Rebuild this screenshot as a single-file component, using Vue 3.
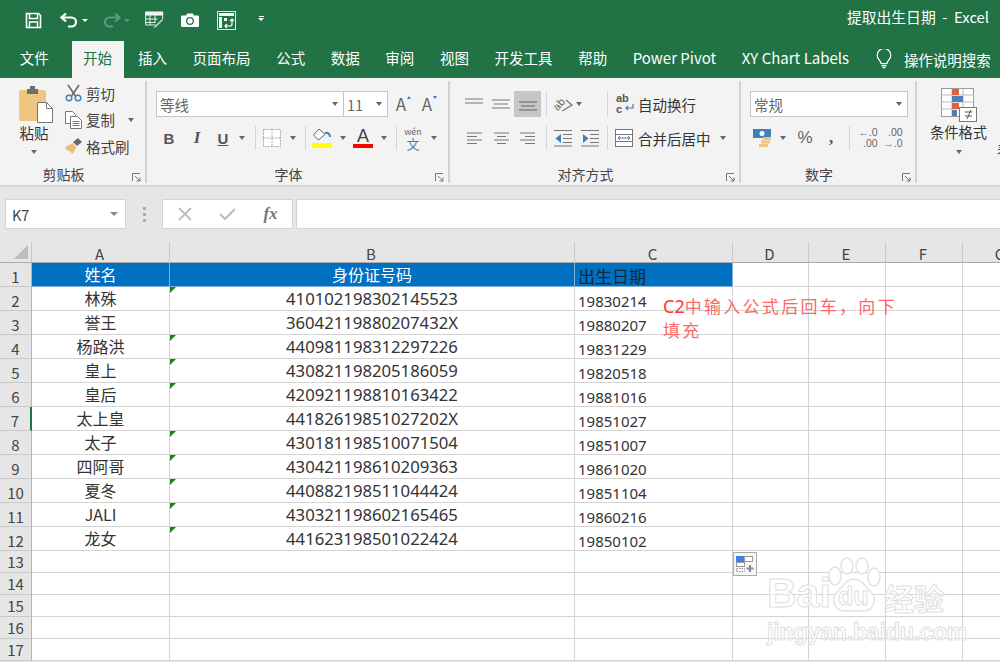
<template>
  <div class="excel">
    <header class="titlebar">
      <div class="qat">
        <svg class="q-save" width="17" height="17" viewBox="0 0 17 17"><path d="M1.500 1.500h12l2 2v12h-14z" fill="none" stroke="#fff" stroke-width="1.600"/><path d="M4.500 2v4.500h8V2M4.500 15v-5h8v5" fill="none" stroke="#fff" stroke-width="1.500"/></svg>
        <svg class="q-undo" width="19" height="16" viewBox="0 0 19 16"><path d="M6 1.500 1.500 5.500 6 9.500M2 5.500h9.500a4.500 4.500 0 0 1 0 9H8" fill="none" stroke="#fff" stroke-width="2.200"/></svg>
        <i class="q-caret"></i>
        <svg class="q-redo" width="19" height="16" viewBox="0 0 19 16"><path d="M13 1.500l4.500 4-4.500 4M17 5.500H7.500a4.500 4.500 0 0 0 0 9H11" fill="none" stroke="#5b9c7c" stroke-width="2.200"/></svg>
        <i class="q-caret dim"></i>
        <svg class="q-form" width="19" height="18" viewBox="0 0 19 18"><path d="M.7 1h17v3H.7z" fill="#e8f0ec" stroke="#fff"/><path d="M.7 4v10h10M.7 8h12M.7 11.500h10M5 4v10M10 4v7M17.700 4v4" fill="none" stroke="#e8f0ec"/><path d="M17 8l-7 7-1.500 2.500 2.500-1.500 7-7z" fill="#cfe0d7"/></svg>
        <svg class="q-camera" width="18" height="14" viewBox="0 0 18 14"><path d="M1 2.500h4L6.200 .5h5.600L13 2.500h4a1 1 0 0 1 1 1V13a1 1 0 0 1-1 1H1a1 1 0 0 1-1-1V3.500a1 1 0 0 1 1-1z" fill="#fff"/><circle cx="9" cy="8" r="3.300" fill="none" stroke="#217346" stroke-width="1.300"/></svg>
        <svg class="q-pivot" width="19" height="19" viewBox="0 0 19 19"><rect x=".5" y=".5" width="18" height="18" fill="none" stroke="#dfe9e3"/><path d="M2 2h15v3H2zM2 6h3v11H2z" fill="#f3f7f5"/><path d="M7 7h3v3H7z" fill="#f3f7f5"/><path d="M15 8v5a2 2 0 0 1-2 2H8M13 10l2-2 2 2M10 13l-2 2 2 2" fill="none" stroke="#fff" stroke-width="1.200"/></svg>
        <span class="q-more"><b></b><i class="q-caret"></i></span>
      </div>
      <div class="doc-title">提取出生日期&nbsp; -&nbsp; Excel</div>
    </header>

    <nav class="tabs">
      <span
        v-for="tab in tabs"
        :key="tab"
        class="tab"
        :class="{ active: tab === '开始', latin: /^[A-Z]/.test(tab) }"
      >{{ tab }}</span>
      <svg class="bulb" width="16" height="20" viewBox="0 0 16 20"><path d="M5 14.500c0-3-3.800-4-3.800-8.200a6.800 6.800 0 0 1 13.600 0C14.800 10.500 11 11.500 11 14.500z" fill="none" stroke="#fff" stroke-width="1.200"/><path d="M5.500 16.500h5M6.500 18.500h3" stroke="#fff" stroke-width="1.300"/></svg>
      <span class="search">操作说明搜索</span>
    </nav>

    <section class="ribbon">
      <div class="group g-clip">
        <div class="clip-body">
          <div class="paste">
            <svg width="34" height="38" viewBox="0 0 34 38"><rect y="5" width="27" height="31" rx="2" fill="#efc67f"/><path d="M8 4h3V1h5v3h3v5H8z" fill="#6f6f6f"/><path d="M18.500 17.500h9l6 6v14h-15z" fill="#fff" stroke="#777"/><path d="M27.500 17.500v6h6" fill="none" stroke="#777"/></svg>
            <span>粘贴</span>
            <i class="caret"></i>
          </div>
          <div class="clip-tools">
            <div class="clip-row">
              <svg width="17" height="18" viewBox="0 0 17 18"><path d="M3 1l7.500 11M14 1 6.500 12" stroke="#666" stroke-width="1.500"/><circle cx="4" cy="14" r="2.800" fill="none" stroke="#3f7fbd" stroke-width="1.400"/><circle cx="13" cy="14" r="2.800" fill="none" stroke="#3f7fbd" stroke-width="1.400"/></svg>
              <span>剪切</span>
            </div>
            <div class="clip-row">
              <svg width="17" height="18" viewBox="0 0 17 18"><path d="M.5.500h7l3 3v9H.500z" fill="#fff" stroke="#777"/><path d="M5.500 5.500h7l4 4v8h-11z" fill="#fff" stroke="#777"/><path d="M7.500 10.500h7M7.500 12.500h7M7.500 14.500h7" stroke="#4b86bd"/></svg>
              <span>复制</span>
              <i class="caret copy-caret"></i>
            </div>
            <div class="clip-row">
              <svg width="17" height="16" viewBox="0 0 17 16"><path d="M0 9.500 7.500 5l4 4.500-4 6.500L4 12.500 2.500 13z" fill="#e9bd72"/><path d="M8 4l5-4 4 4-5 4z" fill="#6a6a6a"/></svg>
              <span>格式刷</span>
            </div>
          </div>
        </div>
        <div class="group-label">剪贴板<svg class="launcher" viewBox="0 0 9 9"><path d="M.5 8V.500H8M3 3l5 5M8 4.500V8H4.500" fill="none" stroke="#777"/></svg></div>
      </div>

      <div class="group g-font">
        <div class="tool-rows">
          <div class="font-top">
            <div class="select font-name"><span>等线</span><i class="caret"></i></div>
            <div class="select font-size"><span>11</span><i class="caret"></i></div>
            <span class="grow">A<i class="tick up"></i></span>
            <span class="grow">A<i class="tick down"></i></span>
          </div>
          <div class="font-tools">
            <b class="fmt">B</b>
            <i class="fmt italic">I</i>
            <u class="fmt under">U</u>
            <i class="caret"></i>
            <i class="sep"></i>
            <svg width="18" height="18" viewBox="0 0 18 18"><rect x=".5" y=".5" width="17" height="17" fill="#fff" stroke="#aaa" stroke-dasharray="2 1"/><path d="M9 0v18M0 9h18" stroke="#aaa" stroke-dasharray="2 1"/></svg>
            <i class="caret"></i>
            <i class="sep"></i>
            <svg width="20" height="20" viewBox="0 0 20 20"><path d="M7 1 1.500 7l5 5 6.500-5.500z" fill="#fff" stroke="#666"/><path d="M13 5c3-1 5 1 5 4" fill="none" stroke="#3f7fbd" stroke-width="2"/><rect y="15" width="20" height="5" fill="#ffff00"/></svg>
            <i class="caret"></i>
            <span class="font-color">A</span>
            <i class="caret"></i>
            <i class="sep"></i>
            <span class="wen"><em>wén</em><strong>文</strong></span>
            <i class="caret"></i>
          </div>
        </div>
        <div class="group-label">字体<svg class="launcher" viewBox="0 0 9 9"><path d="M.5 8V.500H8M3 3l5 5M8 4.500V8H4.500" fill="none" stroke="#777"/></svg></div>
      </div>

      <div class="group g-align">
        <div class="tool-rows">
          <div class="align-top">
            <svg width="18" height="14" viewBox="0 0 18 14"><path d="M0 2h18M0 6h18" stroke="#777" stroke-width="1.200"/></svg>
            <svg width="18" height="14" viewBox="0 0 18 14"><path d="M0 3h18M2 7h14M0 11h18" stroke="#777" stroke-width="1.200"/></svg>
            <span class="active-tool"><svg width="18" height="14" viewBox="0 0 18 14"><path d="M0 5h18M2 9h14M0 13h18" stroke="#666" stroke-width="1.200"/></svg></span>
            <i class="sep"></i>
            <span class="orient">
              <span class="orient-ab">ab</span>
              <svg width="12" height="14" viewBox="0 0 12 14"><path d="M1 13l10-6-6-5" fill="none" stroke="#777" stroke-width="1.300"/></svg>
            </span>
            <i class="caret"></i>
            <span></span>
            <i class="sep"></i>
            <span class="wrap-icon">
              <span class="wrap-ab">ab<br>c</span>
              <svg width="9" height="8" viewBox="0 0 9 8"><path d="M8 0v4H1M3 2 1 4l2 2" fill="none" stroke="#3f7fbd" stroke-width="1.200"/></svg>
            </span>
            <span class="tool-text">自动换行</span>
          </div>
          <div class="align-bottom">
            <svg width="15" height="14" viewBox="0 0 15 14"><path d="M0 2h15M0 5.500h10M0 9h15M0 12.500h10" stroke="#777" stroke-width="1.100"/></svg>
            <svg width="15" height="14" viewBox="0 0 15 14"><path d="M0 2h15M3 5.500h9M0 9h15M3 12.500h9" stroke="#777" stroke-width="1.100"/></svg>
            <svg width="15" height="14" viewBox="0 0 15 14"><path d="M0 2h15M5 5.500h10M0 9h15M5 12.500h10" stroke="#777" stroke-width="1.100"/></svg>
            <i class="sep"></i>
            <svg width="18" height="18" viewBox="0 0 18 18"><path d="M0 1.500h18M9 5.500h9M9 9.500h9M9 13.500h9M0 17h18" stroke="#777"/><path d="M7 5 1.500 9.500 7 14z" fill="#3f7fbd"/></svg>
            <svg width="18" height="18" viewBox="0 0 18 18"><path d="M0 1.500h18M9 5.500h9M9 9.500h9M9 13.500h9M0 17h18" stroke="#777"/><path d="M2 5l5.500 4.500L2 14z" fill="#3f7fbd"/></svg>
            <i class="sep"></i>
            <svg width="18" height="18" viewBox="0 0 18 18"><rect x=".5" y=".5" width="17" height="17" fill="#fff" stroke="#777"/><path d="M0 5.500h18M0 12.500h18" stroke="#777"/><path d="M3 9h12M5 7 3 9l2 2M13 7l2 2-2 2" fill="none" stroke="#3f7fbd"/></svg>
            <span class="tool-text">合并后居中</span>
            <i class="caret merge-caret"></i>
          </div>
        </div>
        <div class="group-label">对齐方式<svg class="launcher" viewBox="0 0 9 9"><path d="M.5 8V.500H8M3 3l5 5M8 4.500V8H4.500" fill="none" stroke="#777"/></svg></div>
      </div>

      <div class="group g-number">
        <div class="tool-rows">
          <div class="select number-format"><span>常规</span><i class="caret"></i></div>
          <div class="number-tools">
            <svg width="20" height="20" viewBox="0 0 20 20"><rect y="1" width="18" height="9" fill="#3f7fbd"/><circle cx="9" cy="5.500" r="2.500" fill="#fff"/><rect x="10" y="9" width="8" height="3" fill="#eec57e"/><rect x="8" y="12.500" width="9" height="3" fill="#eec57e"/><rect x="6" y="16" width="9" height="3" fill="#eec57e"/></svg>
            <i class="caret"></i>
            <span class="percent">%</span>
            <b class="comma">,</b>
            <i class="sep"></i>
            <span class="dec"><em><b class="arrow">←</b>.0</em><em>.00</em></span>
            <span class="dec"><em>.00</em><em><b class="arrow">→</b>.0</em></span>
          </div>
        </div>
        <div class="group-label">数字<svg class="launcher" viewBox="0 0 9 9"><path d="M.5 8V.500H8M3 3l5 5M8 4.500V8H4.500" fill="none" stroke="#777"/></svg></div>
      </div>

      <div class="g-styles">
        <div class="styles-btn">
          <svg width="36" height="34" viewBox="0 0 36 34"><rect x=".5" y=".5" width="32" height="28" fill="#fff" stroke="#999"/><path d="M11 0v29M22 0v29M0 7h33M0 14h33M0 21h33" stroke="#bbb"/><rect x="11" y="1" width="7" height="6" fill="#e0603c"/><rect x="11" y="8" width="11" height="6" fill="#4a7fbc"/><rect x="11" y="15" width="7" height="6" fill="#e0603c"/><rect x="11" y="22" width="5" height="6" fill="#4a7fbc"/><rect x="18.500" y="19.500" width="17" height="14" fill="#fff" stroke="#777"/><path d="M24 24h7M24 28h7M30 22l-4 9" stroke="#555"/></svg>
          <span>条件格式</span>
          <i class="caret"></i>
        </div>
        <span class="next-btn">表</span>
      </div>
    </section>

    <section class="formula">
      <div class="name-box"><span>K7</span><i class="caret"></i></div>
      <div class="grip"><i></i><i></i><i></i></div>
      <div class="fx-box">
        <svg width="16" height="16" viewBox="0 0 16 16"><path d="M2 2l12 12M14 2 2 14" stroke="#bdbdbd" stroke-width="1.800"/></svg>
        <svg width="17" height="14" viewBox="0 0 17 14"><path d="M1 7l5 5L16 2" fill="none" stroke="#bdbdbd" stroke-width="2.200"/></svg>
        <span class="fx">fx</span>
      </div>
      <div class="formula-input"></div>
    </section>

    <section class="sheet">
      <div class="sheet-row col-heads">
        <div class="corner"><svg width="14" height="14" viewBox="0 0 14 14"><path d="M14 0v14H0z" fill="#bdbdbd"/></svg></div>
        <div v-for="col in columns" :key="col" class="col-head">{{ col }}</div>
      </div>
      <div class="sheet-row row-title">
        <div class="row-head">1</div>
        <div class="cell center fill light">姓名</div>
        <div class="cell center fill light">身份证号码</div>
        <div class="cell date title-date fill">出生日期</div>
        <div class="cell"></div><div class="cell"></div><div class="cell"></div><div class="cell"></div>
      </div>
      <div v-for="(p, i) in people" :key="p.id" class="sheet-row row-data">
        <div class="row-head" :class="{ marked: i === 5 }">{{ i + 2 }}</div>
        <div class="cell center">{{ p.name }}</div>
        <div class="cell center id" :class="{ flagged: !p.id.endsWith('X') }">{{ p.id }}</div>
        <div class="cell date">{{ p.date }}</div>
        <div class="cell"></div><div class="cell"></div><div class="cell"></div><div class="cell"></div>
      </div>
      <div v-for="n in emptyRows" :key="n" class="sheet-row row-empty">
        <div class="row-head">{{ n }}</div>
        <div class="cell"></div><div class="cell"></div><div class="cell"></div>
        <div class="cell"></div><div class="cell"></div><div class="cell"></div><div class="cell"></div>
      </div>

      <div class="note"><span class="note-c2">C2</span>中输入公式后回车，向下填充</div>

      <div class="paste-options">
        <svg width="18" height="17" viewBox="0 0 18 17"><rect x=".5" y=".5" width="8" height="5" fill="#3f7fe8" stroke="#3f7fe8"/><rect x="8.500" y=".5" width="8" height="5" fill="#fff" stroke="#999"/><rect x=".5" y="6.500" width="8" height="4" fill="#fff" stroke="#999"/><rect x=".5" y="12.500" width="8" height="3" fill="none" stroke="#999" stroke-dasharray="1.500 1"/><path d="M14 9v7M10.500 12.500h7" stroke="#888" stroke-width="2"/></svg>
      </div>

      <div class="watermark">
        <div class="wm-top">
          <span class="wm-bai">Bai</span>
          <span class="wm-paw">
            <svg width="54" height="56" viewBox="0 0 54 56"><g fill="#fff" stroke="#e2e2e2" stroke-width="1.500"><ellipse cx="8" cy="19" rx="6" ry="9"/><ellipse cx="20" cy="9" rx="6" ry="8"/><ellipse cx="35" cy="9" rx="6" ry="8"/><ellipse cx="47" cy="20" rx="6" ry="9"/><path d="M27 22c8 0 11 8 17 13 7 7 2 20-9 19H19C8 55 3 42 10 35c6-5 9-13 17-13z"/></g></svg>
            <span class="wm-du">du</span>
          </span>
          <span class="wm-jy">经验</span>
        </div>
        <div class="wm-url">jingyan.baidu.com</div>
      </div>
    </section>
  </div>
</template>

<script setup>
const tabs = ["文件", "开始", "插入", "页面布局", "公式", "数据", "审阅", "视图", "开发工具", "帮助", "Power Pivot", "XY Chart Labels"];
const columns = ["A", "B", "C", "D", "E", "F", "G"];
const emptyRows = [13, 14, 15, 16, 17];
const people = [
  { name: "林殊", id: "410102198302145523", date: "19830214" },
  { name: "誉王", id: "36042119880207432X", date: "19880207" },
  { name: "杨路洪", id: "440981198312297226", date: "19831229" },
  { name: "皇上", id: "430821198205186059", date: "19820518" },
  { name: "皇后", id: "420921198810163422", date: "19881016" },
  { name: "太上皇", id: "44182619851027202X", date: "19851027" },
  { name: "太子", id: "430181198510071504", date: "19851007" },
  { name: "四阿哥", id: "430421198610209363", date: "19861020" },
  { name: "夏冬", id: "440882198511044424", date: "19851104" },
  { name: "JALI", id: "430321198602165465", date: "19860216" },
  { name: "龙女", id: "441623198501022424", date: "19850102" },
];
</script>

<style>
html, body { margin: 0; background: #fff; }
</style>

<style scoped>
.excel {
  width: 1000px;
  height: 662px;
  overflow: hidden;
  background: #e6e6e6;
  font-family: "Noto Sans CJK SC", "Noto Sans", sans-serif;
  color: #444;
}

/* title bar */
.titlebar {
  height: 40px;
  background: #217346;
  display: flex;
  align-items: center;
  justify-content: space-between;
  color: #fff;
}
.qat { display: flex; align-items: center; padding-left: 25px; }
.q-undo { margin-left: 18px; }
.q-caret { width: 0; height: 0; border: 3px solid transparent; border-top: 3px solid #fff; margin: 3px 0 0 3px; }
.q-caret.dim { border-top-color: #5b9c7c; }
.q-redo { margin-left: 14px; }
.q-form { margin-left: 15px; }
.q-camera { margin-left: 17px; }
.q-pivot { margin-left: 18px; }
.q-more { display: flex; flex-direction: column; align-items: center; margin-left: 22px; gap: 1px; }
.q-more b { width: 5px; height: 1px; background: #fff; }
.q-more .q-caret { margin: 0; }
.doc-title { font-size: 14.800px; padding-right: 11px; margin-top: -7px; white-space: nowrap; }

/* tabs */
.tabs {
  height: 38px;
  background: #217346;
  display: flex;
  align-items: flex-end;
  padding-left: 7px;
  color: #fff;
  font-size: 14.500px;
}
.tab { height: 37px; line-height: 34px; padding: 0 12.800px; white-space: nowrap; }
.tab.latin { font-size: 15px; }
.tab.active { background: #f3f3f3; color: #217346; margin: 0 1.600px 0 10px; padding: 0 11.500px; }
.bulb { margin: 0 0 9px 14px; }
.search { margin-left: 12px; line-height: 36px; white-space: nowrap; }

/* ribbon */
.ribbon {
  height: 109px;
  box-sizing: border-box;
  background: #f3f3f3;
  border-bottom: 2px solid #d8d8d8;
  display: flex;
  overflow: hidden;
  font-size: 14.500px;
}
.group {
  height: 102px;
  margin-top: 3px;
  flex-shrink: 0;
  box-sizing: border-box;
  border-right: 2px solid #d2d2d2;
  display: flex;
  flex-direction: column;
  position: relative;
}
.group-label {
  position: absolute;
  left: 0;
  right: 18px;
  bottom: -1px;
  height: 20px;
  line-height: 20px;
  text-align: center;
  font-size: 14px;
}
.launcher { position: absolute; right: -14px; bottom: 2px; width: 9px; height: 9px; }
.caret {
  width: 0;
  height: 0;
  border: 3.500px solid transparent;
  border-top: 4px solid #666;
  border-bottom: 0;
  display: block;
}
.sep { display: block; width: 1px; height: 24px; background: #d4d4d4; }
.tool-rows { display: flex; flex-direction: column; gap: 8px; padding-top: 10px; }
.select {
  height: 26px;
  box-sizing: border-box;
  background: #fff;
  border: 1px solid #c6c6c6;
  display: flex;
  align-items: center;
  justify-content: space-between;
  padding: 0 5px 0 3px;
  color: #666;
  font-size: 14.500px;
}

.g-clip { width: 147px; }
.clip-body { display: flex; padding-top: 4px; }
.paste { width: 68px; display: flex; flex-direction: column; align-items: center; color: #333; }
.paste svg { margin-left: 4px; }
.paste span { line-height: 20px; }
.paste .caret { margin-top: 7px; }
.clip-tools { margin-top: -5px; }
.clip-row { height: 26.500px; display: flex; align-items: center; gap: 4px; margin-left: -3px; white-space: nowrap; }
.copy-caret { margin-left: 9px; }

.g-font { width: 303px; padding-left: 9px; }
.font-top { display: flex; align-items: center; }
.font-name { width: 188px; }
.font-size { width: 45px; margin-left: -1px; }
.grow { position: relative; width: 26px; text-align: center; font-size: 17px; line-height: 26px; color: #666; }
.tick { position: absolute; right: 3px; top: 5px; border: 2.500px solid transparent; }
.tick.up { border-bottom: 3px solid #3f7fbd; border-top: 0; }
.tick.down { border-top: 3px solid #3f7fbd; border-bottom: 0; }
.font-tools {
  height: 26px;
  display: grid;
  grid-template-columns: 26px 30px 22px 16px 10px 24px 18px 6px 28px 14px 26px 16px 8px 26px 16px;
  align-items: center;
  justify-items: center;
}
.fmt { font-size: 15px; color: #555; font-family: "Liberation Sans", sans-serif; font-weight: 700; }
.italic { font-family: "Liberation Serif", serif; font-size: 17px; }
.font-color { color: #444; font-size: 18px; line-height: 17px; height: 20px; width: 20px; text-align: center; border-bottom: 4px solid #f00; box-sizing: border-box; font-family: "Liberation Sans", sans-serif; }
.wen { display: flex; flex-direction: column; align-items: center; }
.wen em { font-style: normal; font-size: 9px; line-height: 11px; color: #666; }
.wen strong { font-weight: 400; font-size: 13px; line-height: 14px; color: #3f7fbd; }

.g-align { width: 291px; padding-left: 10px; }
.align-top, .align-bottom {
  height: 26px;
  display: grid;
  align-items: center;
  justify-items: center;
  justify-content: start;
}
.align-top { grid-template-columns: 28px 26px 27px 10px 24px 8px 19px 10px 26px auto; }
.align-bottom { grid-template-columns: 28px 26px 27px 10px 24px 29px 6px 28px auto auto; }
.active-tool { width: 27px; height: 26px; background: #c6c6c6; display: flex; align-items: center; justify-content: center; }
.tool-text { white-space: nowrap; color: #333; }
.merge-caret { margin-left: 9px; }
.orient { display: flex; align-items: center; width: 20px; height: 20px; position: relative; }
.orient-ab { display: block; transform: rotate(-50deg); font: 11px/11px "Liberation Sans", sans-serif; color: #666; }
.orient svg { position: absolute; right: 0; top: 4px; }
.wrap-icon { position: relative; width: 18px; height: 20px; }
.wrap-ab { position: absolute; left: 0; top: -1px; font: 700 11px/11px "Liberation Sans", sans-serif; color: #555; }
.wrap-icon svg { position: absolute; right: 0; bottom: 2px; }

.g-number { width: 176px; padding-left: 9px; }
.number-format { width: 158px; }
.number-tools {
  height: 26px;
  display: grid;
  grid-template-columns: 26px 14px 30px 22px 14px 24px 26px;
  align-items: center;
  justify-items: center;
}
.percent { font-size: 17px; color: #666; font-family: "Liberation Sans", sans-serif; }
.comma { font-size: 17px; line-height: 10px; color: #555; font-family: "Liberation Serif", serif; }
.dec { display: flex; flex-direction: column; align-items: flex-end; font: 10.500px/11px "Liberation Sans", sans-serif; color: #666; }
.dec em { font-style: normal; }
.arrow { color: #3f7fbd; }

.g-styles { display: flex; flex-shrink: 0; padding: 10px 0 0 13px; }
.styles-btn { width: 57px; display: flex; flex-direction: column; align-items: center; color: #333; white-space: nowrap; font-size: 14.300px; }
.styles-btn span { line-height: 20px; }
.styles-btn .caret { margin-top: 8px; }
.next-btn { margin: 51px 0 0 10px; white-space: nowrap; }

/* formula bar */
.formula {
  height: 55px;
  box-sizing: border-box;
  padding: 12px 0 13px 5px;
  display: flex;
  align-items: stretch;
}
.name-box {
  width: 121px;
  box-sizing: border-box;
  background: #fff;
  border: 1px solid #d4d4d4;
  display: flex;
  align-items: center;
  justify-content: space-between;
  padding: 0 7px 0 6px;
  font-size: 14.500px;
}
.name-box .caret { border-width: 4px 4px 0; border-top-color: #888; }
.grip { width: 36px; display: flex; flex-direction: column; align-items: center; justify-content: center; gap: 3px; }
.grip i { width: 3px; height: 3px; background: #aaa; }
.fx-box {
  width: 131px;
  box-sizing: border-box;
  background: #fff;
  border: 1px solid #d4d4d4;
  display: grid;
  grid-template-columns: 43px 43px 43px;
  align-items: center;
  justify-items: center;
}
.fx { font: italic 700 17px "Liberation Serif", serif; color: #777; }
.formula-input { flex: 1; margin-left: 3px; background: #fff; border: 1px solid #d4d4d4; border-right: 0; }

/* sheet */
.sheet { position: relative; background: #fff; }
.sheet-row {
  display: grid;
  grid-template-columns: 32px 138px 405px 158px 76px 77px 77px 77px;
}
.col-heads { height: 21px; background: #e6e6e6; }
.row-title, .row-data { height: 24px; }
.row-empty { height: 22px; }
.corner { display: flex; align-items: flex-end; justify-content: flex-end; padding: 0 3px 3px 0; border-right: 1px solid #c8c8c8; border-bottom: 1px solid #aaa; }
.col-head {
  box-sizing: border-box;
  text-align: center;
  font-size: 15px;
  line-height: 24px;
  color: #444;
  padding-right: 2px;
  border-right: 1px solid #c8c8c8;
  border-bottom: 1px solid #aaa;
  overflow: hidden;
}
.row-head {
  box-sizing: border-box;
  background: #e6e6e6;
  border-right: 1px solid #b4b4b4;
  border-bottom: 1px solid #c8c8c8;
  text-align: center;
  font-size: 15px;
  line-height: 27px;
  overflow: hidden;
}
.row-empty .row-head { line-height: 22px; }
.row-head.marked { border-right: 2px solid #217346; }
.cell {
  position: relative;
  box-sizing: border-box;
  border-right: 1px solid #d4d4d4;
  border-bottom: 1px solid #d4d4d4;
  color: #333;
  font-size: 16px;
  line-height: 23px;
  white-space: nowrap;
}
.center { text-align: center; }
.id { font-family: "Noto Sans", sans-serif; font-size: 16.700px; }
.date { font-family: "Noto Sans", sans-serif; font-size: 15px; line-height: 29px; padding-left: 3px; overflow: hidden; }
.title-date { font-family: "Noto Sans CJK SC", sans-serif; font-size: 17px; line-height: 26px; color: #14283c; }
.fill { background: #0070c0; border-right-color: #7eb0d8; border-bottom-color: #7eb0d8; }
.light { color: #fff; }
.flagged::before {
  content: "";
  position: absolute;
  left: 0;
  top: 0;
  border-top: 6px solid #0e8a16;
  border-right: 6px solid transparent;
}

.note {
  position: absolute;
  left: 663px;
  top: 52px;
  width: 240px;
  font-size: 17px;
  line-height: 24px;
  letter-spacing: 2.300px;
  color: #f66;
}
.note-c2 { color: #f33; font-size: 18px; letter-spacing: 0; font-family: "Noto Sans", sans-serif; }

.paste-options {
  position: absolute;
  left: 733px;
  top: 310px;
  width: 24px;
  height: 24px;
  box-sizing: border-box;
  background: #f6f6f6;
  border: 1px solid #acacac;
  display: flex;
  align-items: center;
  justify-content: center;
}

.watermark {
  position: absolute;
  left: 767px;
  top: 315px;
  width: 180px;
  pointer-events: none;
}
.wm-top { position: relative; height: 62px; }
.wm-bai, .wm-jy, .wm-du, .wm-url {
  color: rgba(255, 255, 255, 0.6);
  -webkit-text-stroke: 1px #e0e0e0;
}
.wm-bai { position: absolute; left: 0; top: 11px; font: 700 41px/50px "Liberation Sans", sans-serif; }
.wm-paw { position: absolute; left: 60px; top: 0; }
.wm-du { position: absolute; left: 11px; top: 24px; font: 700 25px/30px "Liberation Sans", sans-serif; }
.wm-jy { position: absolute; left: 117px; top: 20px; font-size: 30px; line-height: 40px; font-weight: 700; white-space: nowrap; }
.wm-url { font: 700 23px/26px "Liberation Sans", sans-serif; white-space: nowrap; letter-spacing: -0.100px; }
</style>
